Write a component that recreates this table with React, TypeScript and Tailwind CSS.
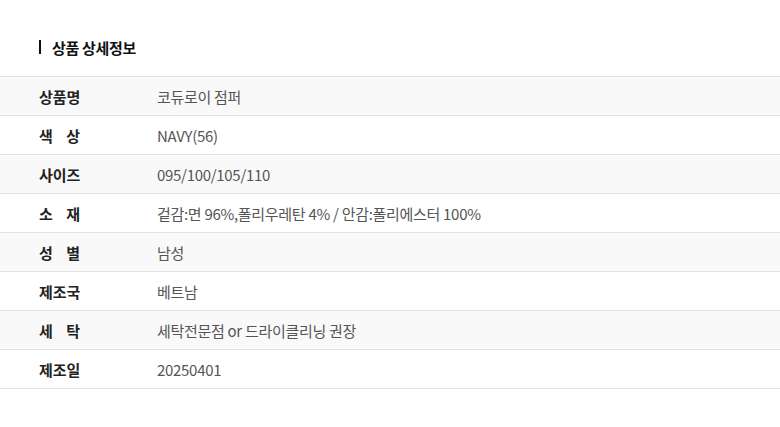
import React from "react";

const rows: { label: string[]; value: string }[] = [
  { label: ["상품명"], value: "코듀로이 점퍼" },
  { label: ["색", "상"], value: "NAVY(56)" },
  { label: ["사이즈"], value: "095/100/105/110" },
  { label: ["소", "재"], value: "겉감:면 96%,폴리우레탄 4% / 안감:폴리에스터 100%" },
  { label: ["성", "별"], value: "남성" },
  { label: ["제조국"], value: "베트남" },
  { label: ["세", "탁"], value: "세탁전문점 or 드라이클리닝 권장" },
  { label: ["제조일"], value: "20250401" },
];

export default function App() {
  return (
    <div
      className="w-[780px] h-[427px] bg-white overflow-hidden"
      style={{ fontFamily: '"Noto Sans CJK KR", "Noto Sans", sans-serif' }}
    >
      <div className="flex items-center h-[18px] mt-[38px] pl-[39px]">
        <div className="w-[2px] h-[14px] bg-[#111]" />
        <div className="ml-[11px] text-[15px] font-bold text-[#111] tracking-[-0.3px] leading-none whitespace-nowrap">
          상품 상세정보
        </div>
      </div>
      <div className="mt-[20px] border-t border-[#e2e2e2]">
        {rows.map((r, i) => (
          <div
            key={i}
            className={`flex items-center h-[39px] border-b border-[#e2e2e2] ${
              i % 2 === 0 ? "bg-[#f9f9f9]" : "bg-white"
            }`}
          >
            <div className="w-[157px] pl-[39px] shrink-0">
              <div className="flex w-[41px] justify-between text-[15px] font-bold text-[#222] leading-none whitespace-nowrap">
                {r.label.map((c, j) => (
                  <span key={j}>{c}</span>
                ))}
              </div>
            </div>
            <div className="text-[15px] text-[#555] tracking-[-0.3px] leading-none whitespace-nowrap">
              {r.value}
            </div>
          </div>
        ))}
      </div>
    </div>
  );
}
